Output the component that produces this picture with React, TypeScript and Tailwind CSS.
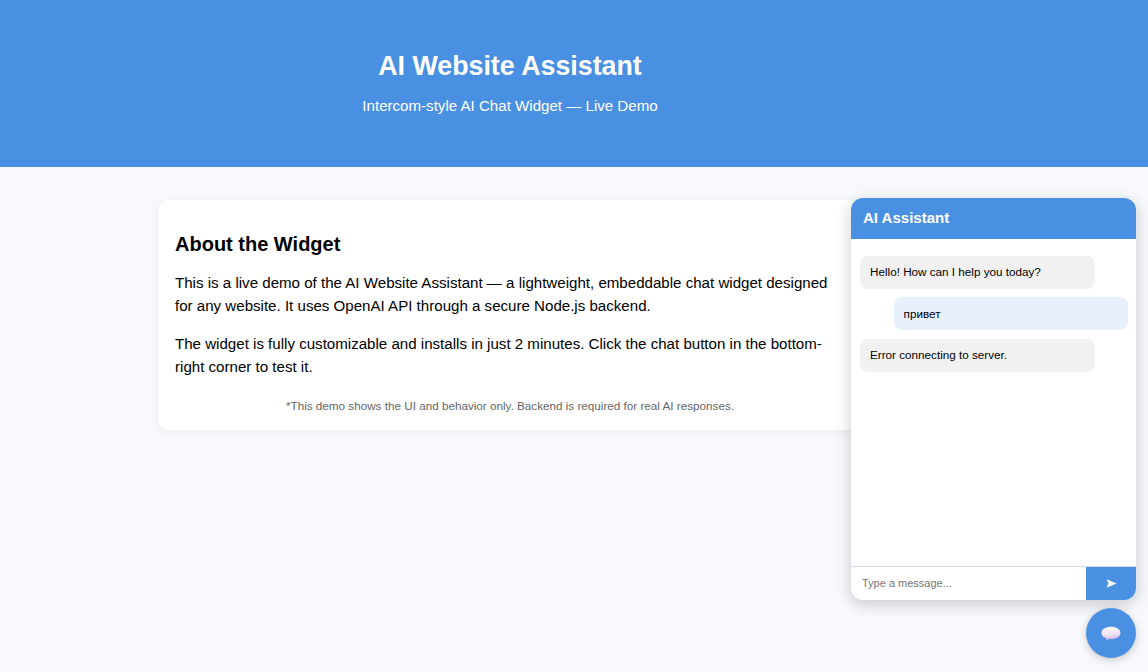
export default function App() {
  return (
    <div className="relative h-[672px] w-full overflow-hidden bg-[#f7f9fc] font-['Liberation_Sans',Arial,sans-serif] text-black">
      <header className="h-[167px] bg-[#4a90e2] text-white">
        <div className="w-[1020px] pt-[50px] text-center">
          <h1 className="text-[26.8px] leading-8 font-bold">AI Website Assistant</h1>
          <p className="mt-[15px] text-[15.1px] leading-[18px]">Intercom-style AI Chat Widget — Live Demo</p>
        </div>
      </header>

      <div className="w-[1020px] pt-[33px]">
        <section className="mx-auto h-[230px] w-[704px] rounded-xl bg-white px-[17px] pt-[33px] shadow-[0_2px_10px_rgba(0,0,0,0.06)]">
          <h2 className="text-xl leading-[23px] font-bold">About the Widget</h2>
          <p className="mt-[15px] text-[15.1px] leading-[23px]">
            This is a live demo of the AI Website Assistant — a lightweight, embeddable chat widget designed for any website. It uses OpenAI API through a secure Node.js backend.
          </p>
          <p className="mt-[15px] text-[15.1px] leading-[23px]">
            The widget is fully customizable and installs in just 2 minutes. Click the chat button in the bottom-right corner to test it.
          </p>
          <p className="mt-[21px] text-center text-[11.7px] leading-[14px] text-[#666666]">
            *This demo shows the UI and behavior only. Backend is required for real AI responses.
          </p>
        </section>
      </div>

      <aside className="absolute top-[198px] left-[851px] flex h-[402px] w-[285px] flex-col overflow-hidden rounded-xl bg-white shadow-[0_4px_16px_rgba(0,0,0,0.2)]">
        <div className="flex h-[41px] items-center bg-[#4a90e2] px-3 text-[15px] font-bold text-white">AI Assistant</div>
        <div className="flex flex-1 flex-col p-[9px] text-[11.7px] leading-[14px]">
          <div className="mt-2 flex h-[33px] w-[235px] items-center rounded-lg bg-[#f1f1f1] px-2.5 pb-0.5">Hello! How can I help you today?</div>
          <div className="mt-2 ml-[33.6px] flex h-[33px] w-[234.4px] items-center rounded-lg bg-[#e8f0fe] px-2.5">привет</div>
          <div className="mt-[9px] flex h-[33px] w-[235px] items-center rounded-lg bg-[#f1f1f1] px-2.5 pb-0.5">Error connecting to server.</div>
        </div>
        <div className="flex h-[34px] border-t border-[#dddddd]">
          <input
            className="min-w-0 flex-1 px-[11px] text-[11px] outline-none placeholder:text-[#757575]"
            placeholder="Type a message..."
          />
          <button className="flex w-[50px] items-center justify-center bg-[#4a90e2] text-white">
            <svg width="11" height="9" viewBox="0 0 11 9" aria-hidden="true">
              <path d="M0.5 0.3 L10.5 4.5 L0.5 8.7 L2.6 4.5 Z" fill="#ffffff" />
            </svg>
          </button>
        </div>
      </aside>

      <button className="absolute top-[608px] left-[1086px] flex h-[50px] w-[50px] items-center justify-center rounded-full bg-[#4a90e2] shadow-[0_2px_8px_rgba(0,0,0,0.2)]">
        <svg className="mt-0.5" width="20" height="16" viewBox="0 0 20 16" aria-hidden="true">
          <defs>
            <linearGradient id="bubble" x1="0.3" y1="0" x2="0.5" y2="1">
              <stop offset="0" stopColor="#fdf9fd" />
              <stop offset="0.55" stopColor="#efe3f3" />
              <stop offset="1" stopColor="#c9aede" />
            </linearGradient>
          </defs>
          <path
            d="M10 0.8 C15.2 0.8 19.5 3.2 19.5 7 C19.5 10.8 15.5 13 10.5 13 C9.6 13 8.8 12.9 8 12.8 C7.2 13.6 6.4 14.4 5.4 14.8 C5.5 13.9 5.4 12.9 5 12.1 C2.2 11.2 0.5 9.2 0.5 7 C0.5 3.2 4.8 0.8 10 0.8 Z"
            fill="url(#bubble)"
          />
        </svg>
      </button>
    </div>
  )
}
